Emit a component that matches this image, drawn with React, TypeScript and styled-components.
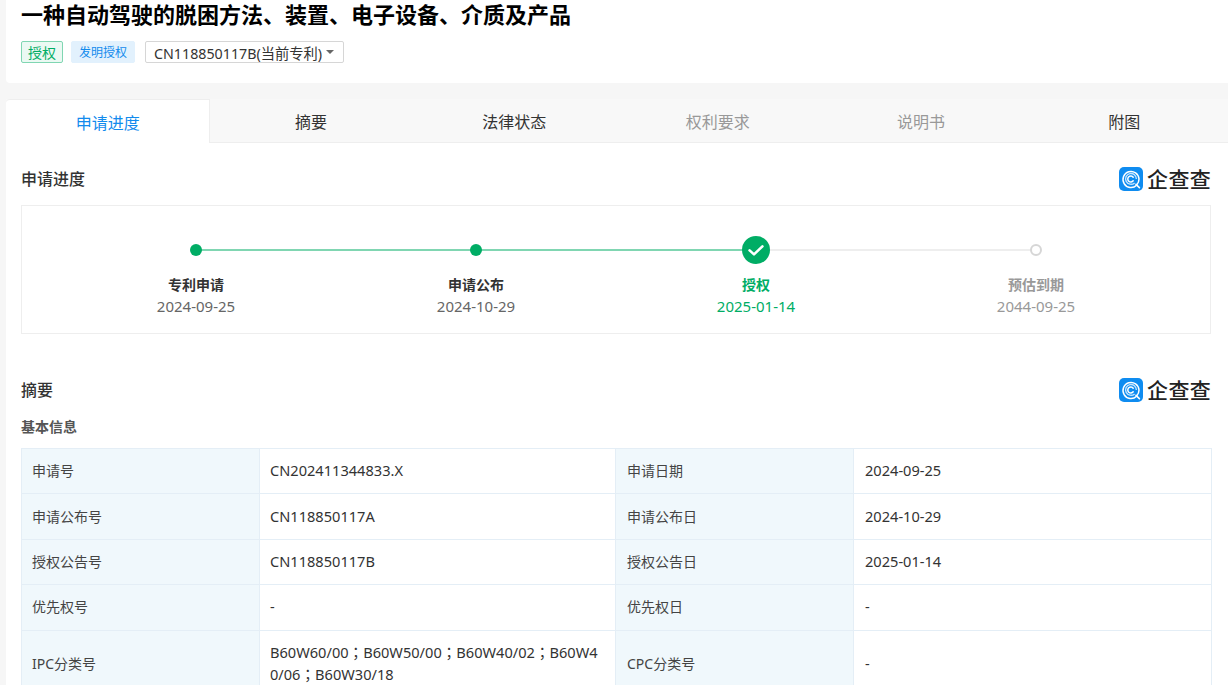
import React from "react";
import styled, { createGlobalStyle } from "styled-components";

const FONT = `"Noto Sans", "Noto Sans CJK SC", sans-serif`;

const Global = createGlobalStyle`
  html, body { margin: 0; padding: 0; height: 685px; overflow: hidden; background: #f6f6f6; }
  body { font-family: ${FONT}; color: #333; font-size: 14px; }
`;

const Page = styled.div`
  position: relative;
  width: 1228px;
  height: 685px;
  overflow: hidden;
  padding-left: 6px;
  box-sizing: border-box;
`;

const HeaderCard = styled.header`
  background: #fff;
  height: 83px;
  border-radius: 0 0 0 4px;
  padding: 0 15px;
  box-sizing: border-box;
`;

const Title = styled.h1`
  margin: 0;
  font-size: 22px;
  line-height: 28px;
  font-weight: 700;
  color: #000;
`;

const MetaRow = styled.div`
  display: flex;
  align-items: center;
  margin-top: 13px;
  height: 22px;
`;

const Tag = styled.span<{ $kind: "green" | "blue" }>`
  display: inline-flex;
  align-items: center;
  justify-content: center;
  box-sizing: border-box;
  height: 22px;
  font-size: ${(p) => (p.$kind === "green" ? "14px" : "12px")};
  border-radius: 2px;
  margin-right: 8px;
  width: ${(p) => (p.$kind === "green" ? "42px" : "64px")};
  color: ${(p) => (p.$kind === "green" ? "#00ad65" : "#128bed")};
  background: ${(p) => (p.$kind === "green" ? "#ebf9f3" : "#e2f1fd")};
  border: 1px solid ${(p) => (p.$kind === "green" ? "#80d6b2" : "#e2f1fd")};
`;

const VersionSelect = styled.div`
  display: inline-flex;
  align-items: center;
  box-sizing: border-box;
  margin-left: 2px;
  width: 199px;
  height: 22px;
  padding-left: 8px;
  border: 1px solid #d6d6d6;
  border-radius: 2px;
  font-size: 14.25px;
  color: #333;
  white-space: nowrap;
`;

const Caret = styled.span`
  margin-left: 4px;
  width: 0;
  height: 0;
  border-left: 4px solid transparent;
  border-right: 4px solid transparent;
  border-top: 4px solid #666;
`;

const Body = styled.main`
  margin-top: 16px;
`;

const Tabs = styled.nav`
  display: grid;
  grid-template-columns: repeat(6, 203.33px);
  height: 44px;
  background: #f8f8f8;
  border-bottom: 1px solid #eee;
  box-sizing: border-box;
`;

const Tab = styled.div<{ $active?: boolean; $disabled?: boolean }>`
  display: flex;
  align-items: center;
  justify-content: center;
  box-sizing: border-box;
  font-size: 16px;
  height: 44px;
  margin-right: ${(p) => (p.$active ? "-1px" : "0")};
  background: ${(p) => (p.$active ? "#fff" : "transparent")};
  color: ${(p) => (p.$active ? "#128bed" : p.$disabled ? "#999" : "#333")};
  border-right: ${(p) => (p.$active ? "1px solid #eee" : "none")};
  border-top: ${(p) => (p.$active ? "1px solid #eee" : "none")};
  border-radius: ${(p) => (p.$active ? "4px 0 0 0" : "0")};
`;

const Content = styled.div`
  background: #fff;
  padding: 0 17px 0 15px;
  height: 560px;
`;

const SectionHead = styled.div`
  display: flex;
  align-items: center;
  justify-content: space-between;
  box-sizing: border-box;
  height: 62px;
  padding-top: 10px;
`;

const SectionTitle = styled.h2`
  margin: 0 0 2px;
  font-size: 16px;
  font-weight: 500;
  color: #333;
`;

const Brand = styled.div`
  display: flex;
  align-items: center;
  gap: 4px;
`;

const BrandName = styled.span`
  font-size: 21px;
  line-height: 24px;
  letter-spacing: 0.3px;
  color: #222;
  font-weight: 500;
`;

const ProgressBox = styled.section`
  display: grid;
  grid-template-columns: repeat(4, 280px);
  box-sizing: border-box;
  padding: 0 34px;
  height: 129px;
  border: 1px solid #eee;
`;

const Step = styled.div`
  position: relative;
  display: flex;
  flex-direction: column;
  align-items: center;
`;

const DotSlot = styled.div`
  position: relative;
  z-index: 1;
  display: flex;
  align-items: center;
  justify-content: center;
  height: 28px;
  margin-top: 30px;
`;

const Connector = styled.span<{ $done?: boolean }>`
  position: absolute;
  left: 50%;
  width: 100%;
  top: 43px;
  height: 2px;
  background: ${(p) => (p.$done ? "#80d6b2" : "#eee")};
`;

const Dot = styled.span<{ $state: "done" | "pending" }>`
  box-sizing: border-box;
  width: 12px;
  height: 12px;
  border-radius: 50%;
  background: ${(p) => (p.$state === "done" ? "#00ad65" : "#fff")};
  border: ${(p) => (p.$state === "done" ? "none" : "2px solid #d6d6d6")};
`;

const StepName = styled.div<{ $tone: "normal" | "current" | "muted" }>`
  margin-top: 11px;
  font-size: 14px;
  line-height: 20px;
  font-weight: 700;
  color: ${(p) => (p.$tone === "current" ? "#00ad65" : p.$tone === "muted" ? "#999" : "#333")};
`;

const StepDate = styled.div<{ $tone: "normal" | "current" | "muted" }>`
  margin-top: 1px;
  font-size: 15px;
  line-height: 20px;
  color: ${(p) => (p.$tone === "current" ? "#00ad65" : p.$tone === "muted" ? "#999" : "#666")};
`;

const Spacer = styled.div`
  height: 20px;
`;

const SubTitle = styled.h3`
  margin: 0;
  height: 32px;
  font-size: 14px;
  line-height: 22px;
  font-weight: 700;
  color: #555;
`;

const InfoTable = styled.table`
  border-collapse: collapse;
  table-layout: fixed;
  width: 1190px;
`;

const Label = styled.th`
  box-sizing: border-box;
  width: 238px;
  padding: 0 10px 2px;
  text-align: left;
  font-weight: 400;
  font-size: 14px;
  color: #444;
  background: #f0f8fc;
  border: 1px solid #e4eef6;
  &:nth-child(3) {
    padding-left: 11px;
  }
`;

const Value = styled.td`
  box-sizing: border-box;
  width: 358px;
  padding: 10.2px 14px 12.2px 10px;
  font-family: "Noto Sans", "Noto Sans CJK TC", sans-serif;
  color: #333;
  font-size: 14.6px;
  line-height: 22px;
  border: 1px solid #e4eef6;
  word-break: break-all;
  &:nth-child(2) {
    width: 356px;
  }
  &:nth-child(4) {
    padding-left: 11px;
  }
`;

const Watermarks = styled.div`
  position: absolute;
  inset: 0;
  pointer-events: none;
  display: grid;
  grid-template-columns: repeat(6, 190px);
  grid-auto-rows: 125px;
  padding: 20px 0 0 40px;
  overflow: hidden;
`;

const Mark = styled.span`
  font-size: 15px;
  letter-spacing: 11px;
  white-space: nowrap;
  color: rgba(0, 0, 0, 0.022);
  transform: rotate(-38deg);
  transform-origin: center;
  align-self: center;
  justify-self: center;
`;

const BrandLogo = () => (
  <Brand>
    <svg width="24" height="24" viewBox="0 0 24 24" aria-hidden="true">
      <rect width="24" height="24" rx="5" fill="#0f8cf0" />
      <path d="M17.6 18.2A8 8 0 1 1 20 12c0 2.2-.8 4.2-2.2 5.7" fill="none" stroke="#fff" strokeWidth="1.5" />
      <path d="M15.6 15.9A5.4 5.4 0 1 1 17.4 12" fill="none" stroke="#bfe3ff" strokeWidth="1.4" />
      <path d="M14.2 10.2a3 3 0 1 0 0 3.6" fill="none" stroke="#fff" strokeWidth="1.5" strokeLinecap="round" />
      <path d="M17 17.4l3.4 3.2" stroke="#fff" strokeWidth="1.6" strokeLinecap="round" />
    </svg>
    <BrandName>企查查</BrandName>
  </Brand>
);

const steps = [
  { name: "专利申请", date: "2024-09-25", tone: "normal" as const },
  { name: "申请公布", date: "2024-10-29", tone: "normal" as const },
  { name: "授权", date: "2025-01-14", tone: "current" as const },
  { name: "预估到期", date: "2044-09-25", tone: "muted" as const },
];

const tabs = [
  { label: "申请进度", active: true },
  { label: "摘要" },
  { label: "法律状态" },
  { label: "权利要求", disabled: true },
  { label: "说明书", disabled: true },
  { label: "附图" },
];

const rows: [string, string, string, string][] = [
  ["申请号", "CN202411344833.X", "申请日期", "2024-09-25"],
  ["申请公布号", "CN118850117A", "申请公布日", "2024-10-29"],
  ["授权公告号", "CN118850117B", "授权公告日", "2025-01-14"],
  ["优先权号", "-", "优先权日", "-"],
  ["IPC分类号", "B60W60/00；B60W50/00；B60W40/02；B60W40/06；B60W30/18", "CPC分类号", "-"],
];

export default function App() {
  return (
    <Page>
      <Global />
      <HeaderCard>
        <Title>一种自动驾驶的脱困方法、装置、电子设备、介质及产品</Title>
        <MetaRow>
          <Tag $kind="green">授权</Tag>
          <Tag $kind="blue">发明授权</Tag>
          <VersionSelect>
            CN118850117B(当前专利)
            <Caret />
          </VersionSelect>
        </MetaRow>
      </HeaderCard>
      <Body>
        <Tabs>
          {tabs.map((t) => (
            <Tab key={t.label} $active={t.active} $disabled={t.disabled}>
              {t.label}
            </Tab>
          ))}
        </Tabs>
        <Content>
          <SectionHead>
            <SectionTitle>申请进度</SectionTitle>
            <BrandLogo />
          </SectionHead>
          <ProgressBox>
            {steps.map((s, i) => (
              <Step key={s.name}>
                {i < steps.length - 1 && <Connector $done={i < 2} />}
                <DotSlot>
                  {s.tone === "current" ? (
                    <svg width="28" height="28" viewBox="0 0 28 28" aria-hidden="true">
                      <circle cx="14" cy="14" r="14" fill="#00ad65" />
                      <path d="M7.6 14.4l4.4 4 8.4-8" fill="none" stroke="#fff" strokeWidth="2.6" strokeLinecap="round" strokeLinejoin="round" />
                    </svg>
                  ) : (
                    <Dot $state={s.tone === "muted" ? "pending" : "done"} />
                  )}
                </DotSlot>
                <StepName $tone={s.tone}>{s.name}</StepName>
                <StepDate $tone={s.tone}>{s.date}</StepDate>
              </Step>
            ))}
          </ProgressBox>
          <Spacer />
          <SectionHead>
            <SectionTitle>摘要</SectionTitle>
            <BrandLogo />
          </SectionHead>
          <SubTitle>基本信息</SubTitle>
          <InfoTable>
            <tbody>
              {rows.map((r) => (
                <tr key={r[0]}>
                  <Label>{r[0]}</Label>
                  <Value>{r[1]}</Value>
                  <Label>{r[2]}</Label>
                  <Value>{r[3]}</Value>
                </tr>
              ))}
            </tbody>
          </InfoTable>
        </Content>
      </Body>
      <Watermarks aria-hidden="true">
        {Array.from({ length: 30 }).map((_, i) => (
          <Mark key={i}>EEV8XKB</Mark>
        ))}
      </Watermarks>
    </Page>
  );
}
